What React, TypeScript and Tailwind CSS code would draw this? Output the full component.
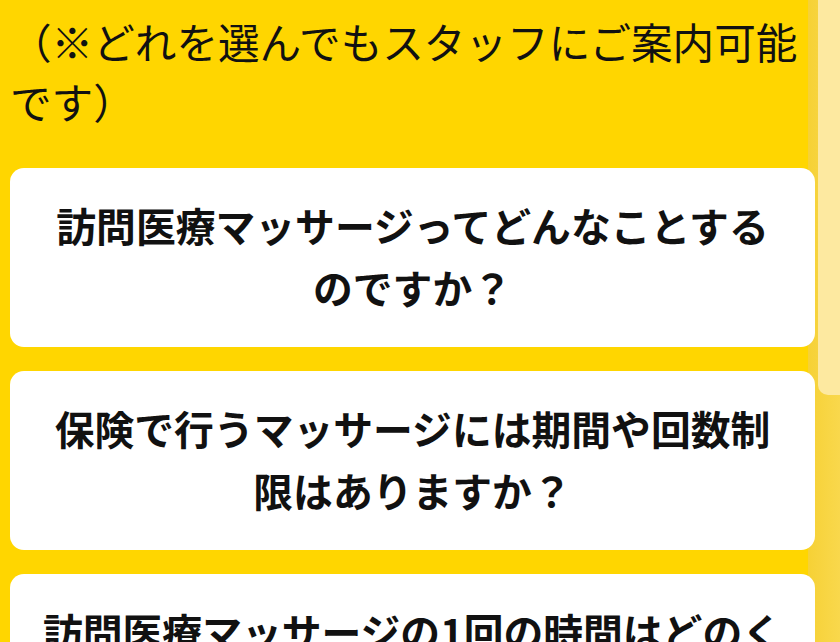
import React from "react";

const questions = [
  "訪問医療マッサージってどんなことするのですか？",
  "保険で行うマッサージには期間や回数制限はありますか？",
  "訪問医療マッサージの1回の時間はどのくらいですか？",
];

export default function App() {
  return (
    <div
      className="flex w-[840px] h-[642px] overflow-hidden bg-[#ffd600]"
      style={{ fontFamily: '"Noto Sans CJK JP", "Noto Sans", sans-serif' }}
    >
      <main className="relative z-10 flex w-[808px] shrink-0 flex-col pl-[10px]">
        <p className="pt-[11px] text-[41.6px] leading-[60px] font-normal text-[#111]">
          （※どれを選んでもスタッフにご案内可能です）
        </p>
        <div className="mt-[37px] mr-[-7px] flex flex-col gap-[24px]">
          {questions.map((q) => (
            <div
              key={q}
              className="shrink-0 rounded-[14px] bg-white px-[30px] pt-[26px] pb-[29px] text-center text-[39.8px] leading-[62px] font-bold text-[#111]"
            >
              {q}
            </div>
          ))}
        </div>
      </main>
      <aside className="flex flex-1 bg-gradient-to-r from-[#f6d135] to-[#f9d84c]">
        <div className="ml-[10px] h-[395px] flex-1 rounded-bl-[10px] bg-[#fde9a0]" />
      </aside>
    </div>
  );
}
